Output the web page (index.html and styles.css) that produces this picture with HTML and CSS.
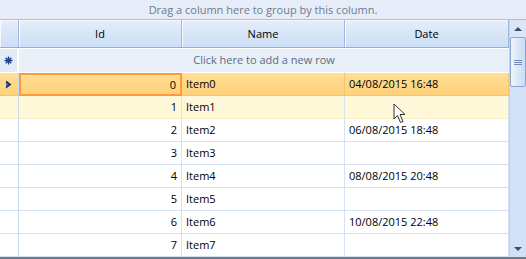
FILE: index.html
```html
<!DOCTYPE html>
<html>
<head>
  <meta charset="UTF-8">
  <title>Grid</title>
  <link rel="stylesheet" href="styles.css">
</head>
<body>
  <div class="grid-view">
    <div class="group-panel">Drag a column here to group by this column.</div>
    <div class="body-area">
      <div class="table">
        <div class="row header">
          <div class="ind"></div>
          <div class="cell">Id</div>
          <div class="cell">Name</div>
          <div class="cell">Date</div>
        </div>
        <div class="row new-row">
          <div class="ind">
            <svg width="9" height="9" viewBox="0 0 9 9"><path d="M4.5 0.5v8M0.5 4.5h8M1.7 1.7l5.6 5.6M7.3 1.7l-5.6 5.6" stroke="#1f3f8a" stroke-width="1.3"/></svg>
          </div>
          <div class="cell span">Click here to add a new row</div>
        </div>
        <div class="row selected">
          <div class="ind">
            <svg width="6" height="9" viewBox="0 0 6 9"><path d="M0 0.5L5.5 4.5L0 8.5Z" fill="#15295f"/><path d="M0 2.5L3 4.5L0 6.5Z" fill="#4e6fb0"/></svg>
          </div>
          <div class="cell num current">0</div>
          <div class="cell">Item0</div>
          <div class="cell">04/08/2015 16:48</div>
        </div>
        <div class="row hover">
          <div class="ind"></div>
          <div class="cell num">1</div>
          <div class="cell">Item1</div>
          <div class="cell"></div>
        </div>
        <div class="row">
          <div class="ind"></div>
          <div class="cell num">2</div>
          <div class="cell">Item2</div>
          <div class="cell">06/08/2015 18:48</div>
        </div>
        <div class="row">
          <div class="ind"></div>
          <div class="cell num">3</div>
          <div class="cell">Item3</div>
          <div class="cell"></div>
        </div>
        <div class="row">
          <div class="ind"></div>
          <div class="cell num">4</div>
          <div class="cell">Item4</div>
          <div class="cell">08/08/2015 20:48</div>
        </div>
        <div class="row">
          <div class="ind"></div>
          <div class="cell num">5</div>
          <div class="cell">Item5</div>
          <div class="cell"></div>
        </div>
        <div class="row">
          <div class="ind"></div>
          <div class="cell num">6</div>
          <div class="cell">Item6</div>
          <div class="cell">10/08/2015 22:48</div>
        </div>
        <div class="row">
          <div class="ind"></div>
          <div class="cell num">7</div>
          <div class="cell">Item7</div>
          <div class="cell"></div>
        </div>
      </div>
      <div class="scrollbar">
        <div class="arrow up"></div>
        <div class="thumb"><span></span><span></span><span></span></div>
        <div class="track"></div>
        <div class="arrow down"></div>
      </div>
    </div>
    <div class="bottom-line"></div>
    <svg class="pointer" width="14" height="22" viewBox="0 0 14 22"><path d="M1 1L1 16L4.5 12.5L7.5 19.5L10 18.5L7 11.5L12 11.5Z" fill="#fff" stroke="#333" stroke-width="1"/></svg>
  </div>
</body>
</html>
```

FILE: styles.css
```css
body {
  margin: 0;
  font-family: 'Open Sans', 'Noto Sans', sans-serif;
  font-size: 11px;
  color: #000;
  background: #fff;
}
.grid-view {
  position: relative;
  width: 526px;
  height: 259px;
  overflow: hidden;
}
.group-panel {
  height: 20px;
  line-height: 19px;
  text-align: center;
  color: #6d7b91;
  background: #e6edf8;
  border-bottom: 1px solid #a8bfe0;
  box-sizing: border-box;
}
.body-area {
  display: flex;
  height: 237px;
}
.table {
  width: 509px;
}
.row {
  display: grid;
  grid-template-columns: 19px 163px 163px 164px;
  height: 23px;
}
.ind {
  border-right: 1px solid #c9d9ef;
  border-bottom: 1px solid #d5e2f3;
  display: flex;
  align-items: center;
  justify-content: center;
}
.cell {
  border-right: 1px solid #d5e2f3;
  border-bottom: 1px solid #d5e2f3;
  line-height: 22px;
  padding: 0 4px;
  white-space: nowrap;
}
.num {
  text-align: right;
}
.header {
  height: 28px;
  background: linear-gradient(#e7eef9, #d9e6f7 45%, #cddff6);
  border-bottom: 1px solid #95b0d8;
  box-sizing: border-box;
}
.header .ind,
.header .cell {
  border-right: 1px solid #9fb8dc;
  border-bottom: none;
  box-shadow: inset 1px 1px 0 #f6f9fe;
  line-height: 27px;
  text-align: center;
}
.new-row {
  background: #e8eff9;
  border-top: 1px solid #fff;
  box-sizing: border-box;
  height: 25px;
}
.new-row .ind {
  border-right: 2px solid #fff;
  border-bottom: 1px solid #fff;
  background: #e3ebf7;
}
.new-row .span {
  grid-column: 2 / 5;
  text-align: center;
  color: #5d6b80;
  border-right: none;
  border-bottom: 1px solid #fff;
  padding: 0;
}
.selected {
  background: linear-gradient(#ffdf96, #ffd07a);
}
.selected .cell {
  border-right-color: #f4c46e;
  border-bottom-color: #f6c46b;
}
.selected .ind {
  border-bottom-color: #f6c46b;
}
.selected .current {
  border: 2px solid #ff9a3c;
  line-height: 19px;
}
.hover {
  background: #fff8d9;
}
.hover .cell,
.hover .ind {
  border-bottom-color: #f7ecc4;
}
.scrollbar {
  width: 17px;
  background: #d2e1f5;
  display: flex;
  flex-direction: column;
  border-left: 1px solid #c3d5ee;
  box-sizing: border-box;
}
.arrow {
  height: 17px;
  display: flex;
  align-items: center;
  justify-content: center;
}
.arrow::after {
  content: "";
  border-left: 4px solid transparent;
  border-right: 4px solid transparent;
}
.up {
  background: #dae6f6;
}
.up::after {
  border-bottom: 4px solid #3f4f66;
}
.down::after {
  border-top: 4px solid #3f4f66;
}
.thumb {
  height: 50px;
  margin: 0 0 0 0;
  border: 1px solid #8ca6cf;
  border-radius: 2px;
  background: linear-gradient(90deg, #f0f5fc, #dbe7f7 50%, #cbdcf3);
  display: flex;
  flex-direction: column;
  align-items: center;
  justify-content: center;
  gap: 1px;
  box-sizing: border-box;
}
.thumb span {
  width: 8px;
  height: 1px;
  background: #6f8bb8;
}
.track {
  flex: 1;
}
.bottom-line {
  height: 2px;
  background: #6f7b8b;
}
.pointer {
  position: absolute;
  left: 393px;
  top: 103px;
}
```
